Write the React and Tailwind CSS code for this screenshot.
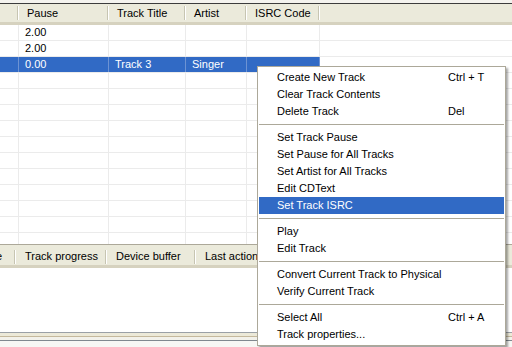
import React from 'react';

const cols = [
  { key: 'n', label: '', w: 19 },
  { key: 'pause', label: 'Pause', w: 90 },
  { key: 'title', label: 'Track Title', w: 77 },
  { key: 'artist', label: 'Artist', w: 61 },
  { key: 'isrc', label: 'ISRC Code', w: 73 },
];

const rows = [
  { pause: '2.00' },
  { pause: '2.00' },
  { pause: '0.00', title: 'Track 3', artist: 'Singer', selected: true },
  {}, {}, {}, {}, {}, {}, {}, {}, {}, {}, {},
];

const menu = [
  [
    { label: 'Create New Track', hint: 'Ctrl + T' },
    { label: 'Clear Track Contents' },
    { label: 'Delete Track', hint: 'Del' },
  ],
  [
    { label: 'Set Track Pause' },
    { label: 'Set Pause for All Tracks' },
    { label: 'Set Artist for All Tracks' },
    { label: 'Edit CDText' },
    { label: 'Set Track ISRC', active: true },
  ],
  [{ label: 'Play' }, { label: 'Edit Track' }],
  [{ label: 'Convert Current Track to Physical' }, { label: 'Verify Current Track' }],
  [{ label: 'Select All', hint: 'Ctrl + A' }, { label: 'Track properties...' }],
];

function HeaderSep() {
  return <div className="w-[2px] h-[14px] border-l border-[#c7c5b2] border-r border-r-white shrink-0" />;
}

function GridHeader() {
  return (
    <div className="h-[21px] flex items-stretch bg-[#ebeadb] border-b-[3px] border-[#d6d2bf]">
      {cols.map((c) => (
        <div key={c.key} className="flex items-center shrink-0" style={{ width: c.w }}>
          <span className="flex-1 pl-[8px] pt-[1px] whitespace-nowrap">{c.label}</span>
          <HeaderSep />
        </div>
      ))}
      <div className="flex-1" />
    </div>
  );
}

function GridRow({ r }) {
  return (
    <div className="h-[16px] flex border-b border-[#ebebeb]">
      {cols.map((c) => (
        <div
          key={c.key}
          className={
            'shrink-0 border-r flex items-center pl-[6px] whitespace-nowrap ' +
            (r.selected ? 'bg-[#316ac5] text-white border-[#6d93d3]' : 'border-[#ebebeb]')
          }
          style={{ width: c.w }}
        >
          {r[c.key] || ''}
        </div>
      ))}
      <div className="flex-1" />
    </div>
  );
}

function StatusHeader() {
  return (
    <div className="h-[23px] pt-[3px] flex items-center bg-[#ebeadb] border-b-[3px] border-[#d6d2bf]">
      <div className="w-[14px] overflow-hidden shrink-0 flex items-center">
        <span className="-ml-[4px]">e</span>
      </div>
      <HeaderSep />
      <div className="w-[89px] pl-[9px] shrink-0 whitespace-nowrap">Track progress</div>
      <HeaderSep />
      <div className="w-[87px] pl-[9px] shrink-0 whitespace-nowrap">Device buffer</div>
      <HeaderSep />
      <div className="flex-1 pl-[9px] whitespace-nowrap">Last action</div>
    </div>
  );
}

function ContextMenu() {
  return (
    <div className="absolute left-[257px] top-[66px] w-[249px] bg-white border border-[#aca899] py-[2px] shadow-[2px_2px_2px_rgba(0,0,0,0.35)]">
      {menu.map((group, gi) => (
        <div key={gi}>
          {gi > 0 && (
            <div className="h-[9px] flex items-center px-[1px]">
              <div className="w-full border-t border-[#aca899]" />
            </div>
          )}
          {group.map((it) => (
            <div
              key={it.label}
              className={
                'h-[17px] mx-[1px] flex items-center pl-[18px] whitespace-nowrap ' +
                (it.active ? 'bg-[#316ac5] text-white' : '')
              }
            >
              <span className="w-[171px]">{it.label}</span>
              {it.hint && <span>{it.hint}</span>}
            </div>
          ))}
        </div>
      ))}
    </div>
  );
}

export default function App() {
  return (
    <div className="relative w-[512px] h-[347px] overflow-hidden bg-white text-[11px] text-black font-['Liberation_Sans',Arial,sans-serif]">
      <div className="h-[244px] overflow-hidden">
        <div className="h-[4px] bg-[#f4f3ee] border-b border-[#3c3c3c]" />
        <GridHeader />
        {rows.map((r, i) => (
          <GridRow key={i} r={r} />
        ))}
      </div>
      <div className="border-t border-[#aca899]">
        <StatusHeader />
        <div className="h-[64px] bg-white" />
        <div className="border-t border-[#9aa0a6] h-[4px] bg-[#ece9d8]" />
        <div className="h-[1px] bg-[#c4b89c]" />
        <div className="h-[3px] bg-[#f2f1ea]" />
        <div className="h-[1px] bg-[#80888f]" />
        <div className="h-[8px] bg-[#f7f7f4]" />
      </div>
      <ContextMenu />
    </div>
  );
}
